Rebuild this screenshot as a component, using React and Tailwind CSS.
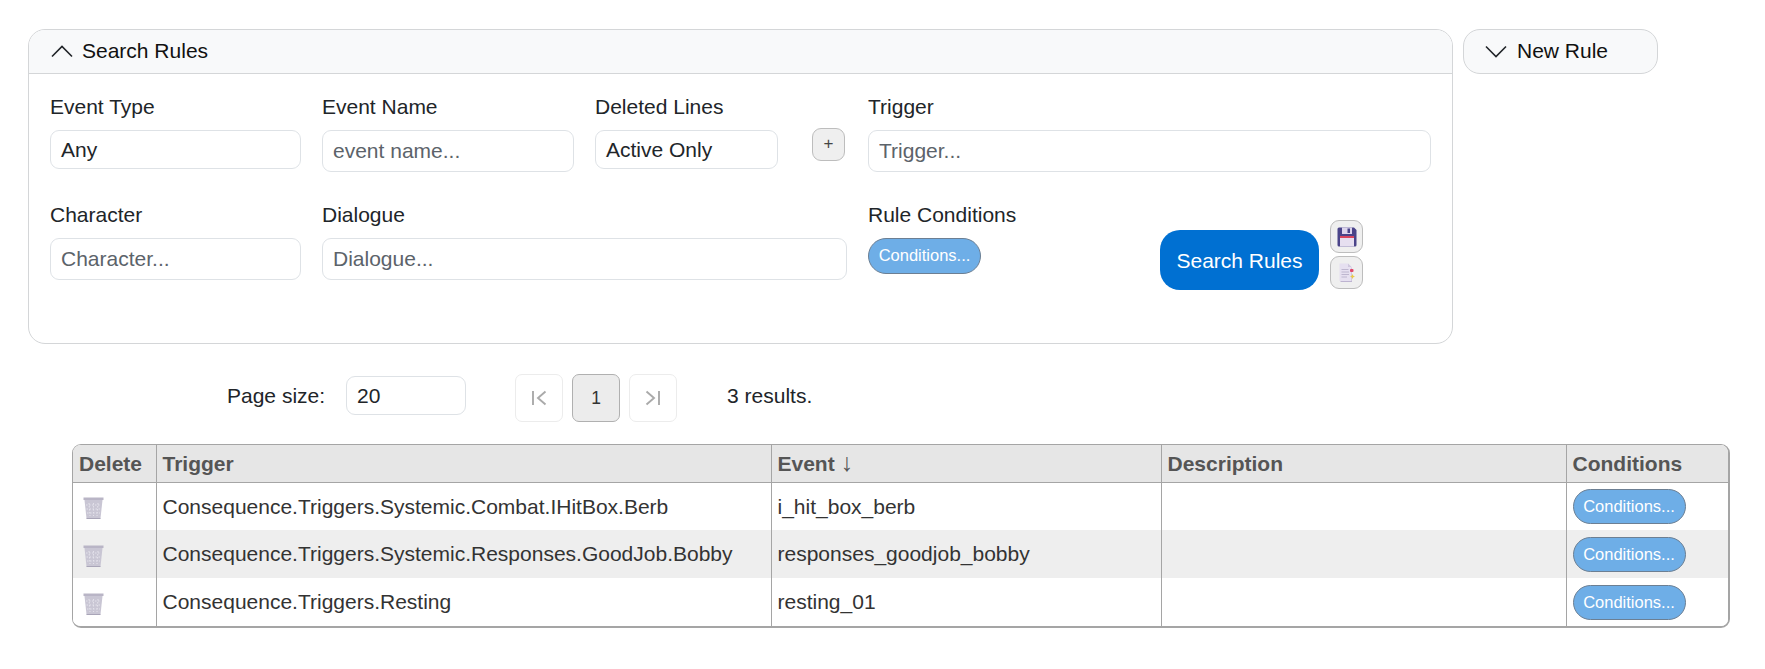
const FONT = "font-['Liberation_Sans',Arial,sans-serif]";

function Chevron({ up }) {
  return (
    <svg width="24" height="24" viewBox="0 0 24 24" fill="none" stroke="#212529" strokeWidth="1.6" className="shrink-0">
      <path d={up ? "M2 17.5 L12 7.5 L22 17.5" : "M2 7.5 L12 17.5 L22 7.5"} />
    </svg>
  );
}

function Field({ label, className, children }) {
  return (
    <div className={`flex flex-col shrink-0 ${className}`}>
      <label className="h-[26px] leading-[23px] mb-[9px] mt-[-2px] whitespace-nowrap">{label}</label>
      {children}
    </div>
  );
}

function TextBox({ placeholder, h = "h-[42px]" }) {
  return (
    <input
      readOnly
      placeholder={placeholder}
      className={`w-full ${h} rounded-[9px] border border-[#dee2e6] bg-white px-[10px] text-[21px] text-[#212529] placeholder:text-[#5c636a] outline-none`}
    />
  );
}

function SelectBox({ value }) {
  return (
    <div className="w-full h-[39px] rounded-[9px] border border-[#dee2e6] bg-white px-[10px] text-[21px] leading-[38px] text-[#212529]">
      {value}
    </div>
  );
}

function ConditionsButton({ className = "" }) {
  return (
    <button className={`w-[113px] rounded-full border border-[#6c7f93] bg-[#6eaee7] text-[16.5px] leading-[28px] text-white ${className}`}>
      Conditions...
    </button>
  );
}

function Floppy() {
  return (
    <svg width="20" height="20" viewBox="0 0 20 20">
      <path d="M0.5 2 Q0.5 0.5 2 0.5 H17 L19.5 3 V18 Q19.5 19.5 18 19.5 H2 Q0.5 19.5 0.5 18 Z" fill="#4a4489" />
      <rect x="5" y="0.5" width="10" height="6.5" fill="#dcd4ec" />
      <rect x="10.5" y="1.5" width="2.5" height="4.5" fill="#4a4489" />
      <rect x="3" y="9" width="14" height="10.5" fill="#e6dff0" />
      <rect x="3" y="9" width="14" height="2" fill="#d9465f" />
    </svg>
  );
}

function NoteIcon() {
  return (
    <svg width="16" height="20" viewBox="0 0 16 20">
      <path d="M1.5 2 H10 L13 5 V19 H1.5 Z" fill="#bdb3d0" />
      <path d="M0.5 0.5 H9 L12.5 4 V18 H0.5 Z" fill="#e6e0f0" />
      <path d="M9 0.5 L12.5 4 H9 Z" fill="#cfc7dd" />
      <path d="M2.5 6.5 H9.5 M2.5 9 H10 M2.5 11.5 H10 M2.5 14 H8" stroke="#b9b1cb" strokeWidth="0.9" />
      <rect x="11" y="6" width="3.5" height="3" rx="1" fill="#e0486a" />
      <path d="M13.5 11 L14.3 12.8 L16 13.5 L14.3 14.2 L13.5 16 L12.7 14.2 L11 13.5 L12.7 12.8 Z" fill="#e9c84a" />
    </svg>
  );
}

function Trash() {
  return (
    <svg width="21" height="22" viewBox="0 0 21 22">
      <path d="M0.5 0.5 H20.5 V3 H0.5 Z" fill="#b9b5c6" />
      <path d="M1.5 3 H19.5 L17.5 21.5 H3.5 Z" fill="#c9c6d4" />
      <path d="M6 6 L7 19 M10.5 6 V19 M15 6 L14 19 M3 8 H18 M3.5 12 H17.5 M4 16 H17" stroke="#e3e1ea" strokeWidth="1.1" strokeDasharray="1.5 1.5" />
      <path d="M3.5 21.5 H17.5" stroke="#a9a5b8" strokeWidth="1" />
    </svg>
  );
}

function IconButton({ children, className = "" }) {
  return (
    <button className={`flex h-[33px] w-[33px] items-center justify-center rounded-[9px] border border-[#bdbdbd] bg-[#efefef] ${className}`}>
      {children}
    </button>
  );
}

function PageButton({ children, active }) {
  return (
    <button
      className={`flex h-[48px] w-[48px] items-center justify-center rounded-[7px] border text-[17.5px] ${
        active ? "border-[#b0b0b0] bg-[#ececec] text-[#333]" : "border-[#ececec] bg-white text-[#a8a8a8]"
      }`}
    >
      {children}
    </button>
  );
}

const ROWS = [
  { trigger: "Consequence.Triggers.Systemic.Combat.IHitBox.Berb", event: "i_hit_box_berb", bg: "bg-white" },
  { trigger: "Consequence.Triggers.Systemic.Responses.GoodJob.Bobby", event: "responses_goodjob_bobby", bg: "bg-[#eeeeee]" },
  { trigger: "Consequence.Triggers.Resting", event: "resting_01", bg: "bg-white" },
];

const TH = "h-[37px] border-b border-r border-[#a5a5a5] bg-[#e6e6e6] pl-[6px] pr-[6px] text-left align-middle font-bold text-[#555555]";
const TD = "border-r border-[#a5a5a5] pl-[6px] pr-[6px] align-middle text-[#333333]";

export default function App() {
  return (
    <div className={`${FONT} h-[669px] w-[1765px] overflow-hidden bg-white pl-[28px] pt-[29px] text-[21px] text-[#212529]`}>
      <div className="flex items-start gap-[10px]">
        <section className="h-[315px] w-[1425px] overflow-hidden rounded-[17px] border border-[#d4d6d8] bg-white">
          <header className="flex h-[44px] items-center gap-[8px] border-b border-[#d4d6d8] bg-[#f8f9fa] pb-[1px] pl-[21px] text-[#111]">
            <Chevron up />
            <span>Search Rules</span>
          </header>
          <div className="flex pl-[21px] pt-[23px]">
            <Field label="Event Type" className="w-[251px] mr-[21px]"><SelectBox value="Any" /></Field>
            <Field label="Event Name" className="w-[252px] mr-[21px]"><TextBox placeholder="event name..." /></Field>
            <Field label="Deleted Lines" className="w-[183px] mr-[34px]"><SelectBox value="Active Only" /></Field>
            <button className="mt-[31px] h-[33px] w-[33px] shrink-0 rounded-[9px] border border-[#bdbdbd] bg-[#efefef] pb-[2px] text-[17px] text-[#444] mr-[23px]">+</button>
            <Field label="Trigger" className="w-[563px]"><TextBox placeholder="Trigger..." /></Field>
          </div>
          <div className="flex pl-[21px] pt-[33px]">
            <Field label="Character" className="w-[251px] mr-[21px]"><TextBox placeholder="Character..." /></Field>
            <Field label="Dialogue" className="w-[525px] mr-[21px]"><TextBox placeholder="Dialogue..." /></Field>
            <Field label="Rule Conditions" className="w-[292px]"><ConditionsButton className="h-[36px] pb-[3px]" /></Field>
            <button className="mt-[25px] h-[60px] w-[159px] shrink-0 rounded-[20px] bg-[#0070d2] pt-[1px] text-white">Search Rules</button>
            <div className="ml-[11px] mt-[15px] flex flex-col gap-[3px]">
              <IconButton><Floppy /></IconButton>
              <IconButton><NoteIcon /></IconButton>
            </div>
          </div>
        </section>
        <section className="flex h-[45px] w-[195px] items-center gap-[9px] rounded-[17px] border border-[#d4d6d8] bg-[#f8f9fa] pb-[1px] pl-[20px] text-[#111]">
          <Chevron />
          <span>New Rule</span>
        </section>
      </div>

      <div className="ml-[199px] mt-[30px] flex h-[48px] items-start">
        <span className="mr-[21px] mt-[6px]">Page size:</span>
        <div className="mr-[49px] mt-[2px] h-[39px] w-[120px] rounded-[9px] border border-[#dee2e6] px-[10px] leading-[38px]">20</div>
        <div className="flex gap-[9px]">
          <PageButton>
            <svg width="16" height="16" viewBox="0 0 16 16" fill="none" stroke="#aaaaaa" strokeWidth="1.9"><path d="M2 1 V15 M14.5 1.5 L7 8 L14.5 14.5" /></svg>
          </PageButton>
          <PageButton active>1</PageButton>
          <PageButton>
            <svg width="16" height="16" viewBox="0 0 16 16" fill="none" stroke="#aaaaaa" strokeWidth="1.9"><path d="M14 1 V15 M1.5 1.5 L9 8 L1.5 14.5" /></svg>
          </PageButton>
        </div>
        <span className="ml-[50px] mt-[6px]">3 results.</span>
      </div>

      <div className="ml-[44px] mt-[22px] w-[1658px] overflow-hidden rounded-[9px] border-2 border-t border-l border-[#a5a5a5]">
        <table className="w-full table-fixed border-collapse">
          <colgroup>
            <col className="w-[83px]" />
            <col className="w-[615px]" />
            <col className="w-[390px]" />
            <col className="w-[405px]" />
            <col />
          </colgroup>
          <thead>
            <tr>
              <th className={TH}>Delete</th>
              <th className={TH}>Trigger</th>
              <th className={TH}>Event <span className="text-[25px] leading-[20px] font-normal">↓</span></th>
              <th className={TH}>Description</th>
              <th className={`${TH} border-r-0`}>Conditions</th>
            </tr>
          </thead>
          <tbody>
            {ROWS.map((row) => (
              <tr key={row.event} className={`h-[48px] ${row.bg}`}>
                <td className={TD}><div className="pl-[4px] pt-[3px]"><Trash /></div></td>
                <td className={TD}>{row.trigger}</td>
                <td className={TD}>{row.event}</td>
                <td className={TD}></td>
                <td className={`${TD} border-r-0`}><ConditionsButton className="block h-[35px] pb-[1px]" /></td>
              </tr>
            ))}
          </tbody>
        </table>
      </div>
    </div>
  );
}
